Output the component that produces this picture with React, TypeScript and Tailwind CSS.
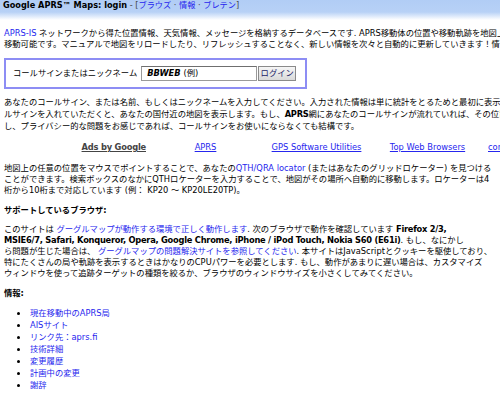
import React from "react";

const L = "text-[#2626ee]";
const B = "font-bold tracking-[-0.25px]";

export default function App() {
  return (
    <div className="w-[500px] h-[394px] overflow-hidden bg-white text-black font-['DejaVu_Sans','Noto_Sans_CJK_JP',sans-serif] text-[8.3px] leading-[11px]">
      <div className="h-[20px] pl-[3px] bg-[linear-gradient(to_bottom,#b1cdf5_0px,#b7d1f6_12px,#ffffff_20px)] whitespace-nowrap text-[8.2px] leading-[11px]">
        <span className="font-bold">Google APRS™ Maps: login</span>
        <span className="text-[#444]"> - [</span>
        <span className={L}>ブラウズ</span>
        <span className="text-[#444]"> · </span>
        <span className={L}>情報</span>
        <span className="text-[#444]"> · </span>
        <span className={L}>ブレテン</span>
        <span className="text-[#444]">]</span>
      </div>

      <div className="px-[4px] whitespace-nowrap">
        <p className="mt-[7.5px] leading-[11.5px]">
          <span className={L}>APRS-IS</span> ネットワークから得た位置情報、天気情報、メッセージを格納するデータベースです. APRS移動体の位置や移動軌跡を地図上に表示します。
          <br />
          移動可能です。マニュアルで地図をリロードしたり、リフレッシュすることなく、新しい情報を次々と自動的に更新していきます！情報
        </p>

        <div className="mt-[7.5px] w-[303px] h-[31px] border-2 border-[#8d8df4] flex items-center pl-[7px]">
          <span className="shrink-0">コールサインまたはニックネーム</span>
          <div className="shrink-0 ml-[4px] w-[116px] h-[15px] border border-[#9a9a9a] border-t-[#6f6f6f] bg-white flex items-center pl-[5px]">
            <span className="font-bold italic">BBWEB</span>
            <span className="ml-[3px]">(例)</span>
          </div>
          <div className="shrink-0 ml-[1px] w-[38px] h-[15px] border border-[#8a8a8a] bg-[linear-gradient(to_bottom,#f6f6f6,#d9d9d9)] flex items-center justify-center text-[#1c1c66]">
            ログイン
          </div>
        </div>

        <p className="mt-[7px] leading-[12px]">
          あなたのコールサイン、または名前、もしくはニックネームを入力してください。入力された情報は単に統計をとるためと最初に表示する地図
          <br />
          ルサインを入れていただくと、あなたの国付近の地図を表示します。もし、<b className={B}>APRS</b>網にあなたのコールサインが流れていれば、その位置
          <br />
          し、プライバシー的な問題をお感じであれば、コールサインをお使いにならなくても結構です。
        </p>
      </div>

      <div className="mt-[10px] flex whitespace-nowrap leading-[11px]">
        <div className="shrink-0 w-[150px] text-right pr-[4px]">
          <span className="font-bold text-[#444] underline tracking-[-0.2px]">Ads by Google</span>
        </div>
        <div className="shrink-0 w-[111px] text-center">
          <span className={`${L} underline`}>APRS</span>
        </div>
        <div className="shrink-0 w-[111px] text-center">
          <span className={`${L} underline`}>GPS Software Utilities</span>
        </div>
        <div className="shrink-0 w-[111px] text-center">
          <span className={`${L} underline`}>Top Web Browsers</span>
        </div>
        <div className="shrink-0 w-[111px] pl-[5px]">
          <span className={`${L} underline`}>cordless phones</span>
        </div>
      </div>

      <div className="px-[4px] whitespace-nowrap">
        <p className="mt-[9.5px]">
          地図上の任意の位置をマウスでポイントすることで、あなたの<span className={L}>QTH/QRA locator</span> (またはあなたのグリッドロケーター) を見つける
          <br />
          ことができます。検索ボックスのなかにQTHロケーターを入力することで、地図がその場所へ自動的に移動します。ロケーターは4
          <br />
          桁から10桁まで対応しています (例： KP20 〜 KP20LE20TP)。
        </p>

        <p className="mt-[9px] font-bold">サポートしているブラウザ:</p>

        <p className="mt-[8px]">
          このサイトは <span className={L}>グーグルマップが動作する環境で正しく動作します</span>. 次のブラウザで動作を確認しています <b className={B}>Firefox 2/3,</b>
          <br />
          <b className={B}>MSIE6/7, Safari, Konqueror, Opera, Google Chrome, iPhone / iPod Touch, Nokia S60 (E61i)</b>. もし、なにかし
          <br />
          ら問題が生じた場合は、 <span className={L}>グーグルマップの問題解決サイトを参照してください</span>. 本サイトはJavaScriptとクッキーを駆使しており、
          <br />
          特にたくさんの局や軌跡を表示するときはかなりのCPUパワーを必要とします. もし、動作があまりに遅い場合は、カスタマイズ
          <br />
          ウィンドウを使って追跡ターゲットの種類を絞るか、ブラウザのウィンドウサイズを小さくしてみてください。
        </p>

        <p className="mt-[9.5px] font-bold">情報:</p>

        <ul className="mt-[8px] list-disc pl-[26px] leading-[11px] marker:text-black marker:text-[10.5px]">
          <li><span className={L}>現在移動中のAPRS局</span></li>
          <li><span className={L}>AISサイト</span></li>
          <li><span className={L}>リンク先：aprs.fi</span></li>
          <li><span className={L}>技術詳細</span></li>
          <li><span className={L}>変更履歴</span></li>
          <li><span className={L}>計画中の変更</span></li>
          <li><span className={L}>謝辞</span></li>
        </ul>
      </div>
    </div>
  );
}
